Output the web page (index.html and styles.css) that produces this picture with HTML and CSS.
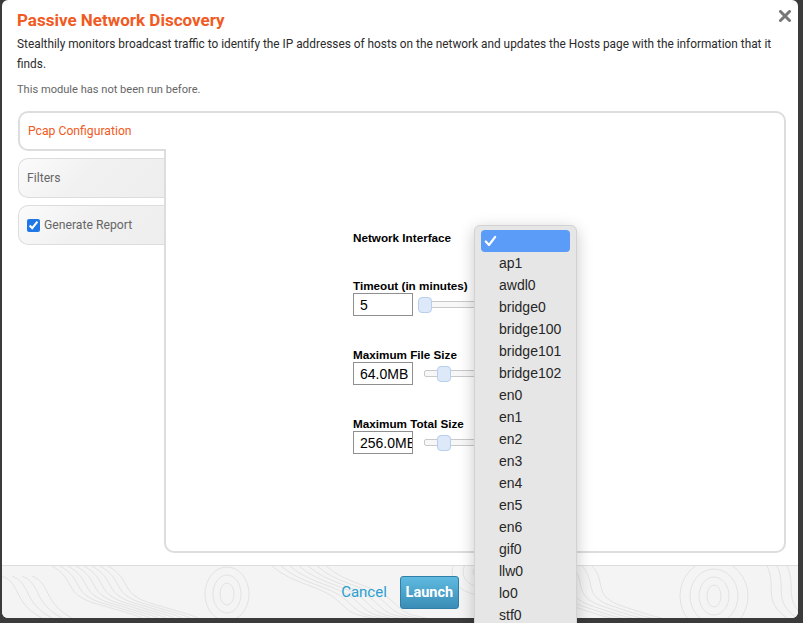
FILE: index.html
```html
<!DOCTYPE html>
<html lang="en">
<head>
<meta charset="utf-8">
<title>Passive Network Discovery</title>
<link rel="stylesheet" href="styles.css">
</head>
<body>
<div class="modal">
  <header class="modal-header">
    <h1 class="title">Passive Network Discovery</h1>
    <button class="close" type="button" aria-label="Close">
      <svg width="12" height="12" viewBox="0 0 12 12"><path d="M1.5 1.5 L10.5 10.5 M10.5 1.5 L1.5 10.5" stroke="#777" stroke-width="3" stroke-linecap="round" fill="none"/></svg>
    </button>
    <p class="desc">Stealthily monitors broadcast traffic to identify the IP addresses of hosts on the network and updates the Hosts page with the information that it finds.</p>
    <p class="note">This module has not been run before.</p>
  </header>

  <div class="tabs">
    <ul class="tab-list">
      <li class="tab tab-active">Pcap Configuration</li>
      <li class="tab">Filters</li>
      <li class="tab"><input class="check" type="checkbox" checked> Generate Report</li>
    </ul>
    <div class="tab-panel">
      <form class="form">
        <div class="field field-inline">
          <label class="label">Network Interface</label>
          <div class="select-box"></div>
        </div>
        <div class="field">
          <label class="label">Timeout (in minutes)</label>
          <div class="control">
            <input class="text-input" type="text" value="5">
            <div class="slider"><div class="track"></div><div class="thumb" style="left:0%"></div></div>
          </div>
        </div>
        <div class="field">
          <label class="label">Maximum File Size</label>
          <div class="control">
            <input class="text-input" type="text" value="64.0MB">
            <div class="slider"><div class="track"></div><div class="thumb" style="left:14.6%"></div></div>
          </div>
        </div>
        <div class="field">
          <label class="label">Maximum Total Size</label>
          <div class="control">
            <input class="text-input" type="text" value="256.0MB">
            <div class="slider"><div class="track"></div><div class="thumb" style="left:14.6%"></div></div>
          </div>
        </div>
      </form>
    </div>
  </div>

  <footer class="modal-footer">
    <svg class="topo" width="796" height="52" viewBox="0 0 796 52" preserveAspectRatio="none">
      <defs>
        <path id="w1" d="M50 0 C 75 14, 60 28, 95 38 S 130 48, 140 52" />
        <path id="w2" d="M270 0 C 290 18, 320 20, 335 34 S 350 48, 370 52" />
        <path id="w3" d="M540 0 C 555 16, 540 30, 570 40 S 600 50, 610 52" />
        <path id="w4" d="M0 10 C 20 18, 10 36, 40 52" />
      </defs>
      <g fill="none" stroke="#e0e0e0" stroke-width="0.9">
        <use href="#w4"/><use href="#w4" x="10"/><use href="#w4" x="20"/><use href="#w4" x="30"/>
        <use href="#w1"/><use href="#w1" x="8"/><use href="#w1" x="16"/><use href="#w1" x="24"/><use href="#w1" x="32"/><use href="#w1" x="40"/><use href="#w1" x="48"/><use href="#w1" x="56"/>
        <ellipse cx="225" cy="28" rx="7" ry="11"/>
        <ellipse cx="225" cy="28" rx="14" ry="19"/>
        <ellipse cx="225" cy="28" rx="22" ry="27"/>
        <use href="#w2"/><use href="#w2" x="9"/><use href="#w2" x="18"/><use href="#w2" x="27"/><use href="#w2" x="36"/><use href="#w2" x="45"/><use href="#w2" x="54"/>
        <ellipse cx="480" cy="6" rx="9" ry="7"/>
        <ellipse cx="480" cy="6" rx="19" ry="15"/>
        <ellipse cx="480" cy="6" rx="30" ry="23"/>
        <use href="#w3"/><use href="#w3" x="10"/><use href="#w3" x="20"/><use href="#w3" x="30"/><use href="#w3" x="40"/><use href="#w3" x="50"/>
        <ellipse cx="712" cy="30" rx="7" ry="11"/>
        <ellipse cx="712" cy="30" rx="15" ry="19"/>
        <ellipse cx="712" cy="30" rx="24" ry="27"/>
        <ellipse cx="712" cy="30" rx="34" ry="36"/>
        <path d="M765 0 C 775 20, 760 35, 785 52"/>
        <path d="M775 0 C 785 20, 770 35, 795 52"/>
        <path d="M785 0 C 795 20, 780 35, 805 52"/>
      </g>
    </svg>
    <a class="cancel" href="#">Cancel</a>
    <button class="launch" type="button">Launch</button>
  </footer>
</div>

<div class="popup">
  <div class="popup-item popup-selected">
    <svg class="checkmark" width="13" height="12" viewBox="0 0 13 12"><path d="M1.8 6.5 L5 10 L11.2 1.8" stroke="#fff" stroke-width="2.2" fill="none" stroke-linecap="round" stroke-linejoin="round"/></svg>
  </div>
  <div class="popup-item">ap1</div>
  <div class="popup-item">awdl0</div>
  <div class="popup-item">bridge0</div>
  <div class="popup-item">bridge100</div>
  <div class="popup-item">bridge101</div>
  <div class="popup-item">bridge102</div>
  <div class="popup-item">en0</div>
  <div class="popup-item">en1</div>
  <div class="popup-item">en2</div>
  <div class="popup-item">en3</div>
  <div class="popup-item">en4</div>
  <div class="popup-item">en5</div>
  <div class="popup-item">en6</div>
  <div class="popup-item">gif0</div>
  <div class="popup-item">llw0</div>
  <div class="popup-item">lo0</div>
  <div class="popup-item">stf0</div>
</div>
</body>
</html>
```

FILE: styles.css
```css
* { box-sizing: border-box; }

html, body {
  margin: 0;
  padding: 0;
  width: 803px;
  height: 623px;
  overflow: hidden;
  background: #3b3b3b;
}

body {
  position: relative;
  font-family: Roboto, "Liberation Sans", sans-serif;
}

.modal {
  position: relative;
  width: 796px;
  height: 618px;
  margin-left: 2px;
  background: #fff;
  border-radius: 6px;
  overflow: hidden;
  display: flex;
  flex-direction: column;
}

.modal-header {
  padding: 10px 10px 0 15px;
}

.title {
  margin: 0;
  font-family: Roboto, sans-serif;
  font-weight: 700;
  font-size: 17px;
  line-height: 20px;
  color: #f15a22;
}

.close {
  position: absolute;
  top: 10px;
  right: 7px;
  width: 12px;
  height: 12px;
  padding: 0;
  border: 0;
  background: none;
  display: block;
}
.close svg { display: block; }

.desc {
  margin: 4px 0 0;
  font-size: 11.85px;
  line-height: 20px;
  color: #2b2b2b;
}

.note {
  margin: 8px 0 0;
  font-size: 11.1px;
  line-height: 16px;
  color: #666;
}

.tabs {
  display: flex;
  height: 442px;
  margin: 13px 12px 0 16px;
}

.tab-list {
  list-style: none;
  margin: 0;
  padding: 0;
  width: 146px;
  display: flex;
  flex-direction: column;
  gap: 7px;
  position: relative;
  z-index: 2;
}

.tab {
  height: 40px;
  display: flex;
  align-items: center;
  padding-left: 8px;
  font-size: 12.2px;
  color: #666;
  border: 1px solid #ddd;
  border-right: 0;
  border-radius: 10px 0 0 10px;
  background: linear-gradient(135deg, #fbfbfb 0%, #f1f1f1 45%, #eeeeee 100%);
}

.tab-active {
  width: 148px;
  border: 2px solid #ddd;
  border-right: 0;
  background: #fff;
  color: #f15a22;
}

.check {
  width: 13px;
  height: 13px;
  margin: 0 4px 0 0;
  accent-color: #1f78e6;
}

.tab-panel {
  flex: 1;
  border: 2px solid #ddd;
  border-radius: 0 10px 10px 10px;
  background: #fff;
}

.form {
  padding: 117px 0 0 187px;
  font-family: "Liberation Sans", Arial, sans-serif;
}

.field {
  margin-bottom: 31px;
}

.field-inline {
  display: flex;
  align-items: center;
  height: 15px;
  margin-bottom: 33px;
}

.label {
  display: block;
  font-weight: 700;
  font-size: 11.7px;
  line-height: 15px;
  color: #000;
}

.select-box {
  width: 90px;
  height: 20px;
  margin-left: 30px;
  border: 1px solid #aaa;
  border-radius: 4px;
}

.control {
  display: flex;
  align-items: center;
  height: 23px;
}

.text-input {
  width: 60px;
  height: 23px;
  margin: 0;
  padding: 0 0 0 6px;
  border: 1px solid #8f8f8f;
  font-family: "Liberation Sans", Arial, sans-serif;
  font-size: 14px;
  color: #000;
  background: #fff;
}

.slider {
  position: relative;
  width: 130px;
  height: 16px;
  margin-left: 11px;
}

.track {
  position: absolute;
  left: 0;
  right: 0;
  top: 4px;
  height: 7px;
  border: 1px solid #c9c9c9;
  border-radius: 2px;
  background: #f7f7f7;
}

.thumb {
  position: absolute;
  top: 0;
  width: 14px;
  height: 16px;
  margin-left: -6px;
  border: 1px solid #b7cfec;
  border-radius: 4px;
  background: #dde9f8;
}

.modal-footer {
  position: relative;
  margin-top: 12px;
  height: 53px;
  border-top: 1px solid #ddd;
  background: #f4f4f4;
  display: flex;
  align-items: center;
  justify-content: center;
  gap: 13px;
}

.topo {
  position: absolute;
  left: 0;
  top: 0;
  width: 100%;
  height: 100%;
}

.cancel {
  position: relative;
  font-family: "Liberation Sans Narrow", Roboto, sans-serif;
  font-size: 15px;
  color: #2a9fd0;
  text-decoration: none;
}

.launch {
  position: relative;
  width: 59px;
  height: 33px;
  padding: 0;
  border: 1px solid #2f7fa7;
  border-radius: 3px;
  background: linear-gradient(#5fbae0, #3a8db6);
  color: #fff;
  font-family: "Liberation Sans Narrow", Roboto, sans-serif;
  font-weight: 700;
  font-size: 14.5px;
}

.popup {
  position: absolute;
  left: 474px;
  top: 225px;
  width: 103px;
  height: 420px;
  padding: 4px 6px 0;
  background: #e6e6e6;
  border: 1px solid #d2d2d2;
  border-radius: 6px;
  box-shadow: 0 4px 16px rgba(0, 0, 0, 0.22);
  font-family: "Liberation Sans", Arial, sans-serif;
  z-index: 10;
}

.popup-item {
  position: relative;
  height: 22px;
  line-height: 22px;
  padding-left: 18px;
  font-size: 14px;
  color: #262626;
}

.popup-selected {
  background: #5a9cf7;
  border-radius: 4px;
}

.checkmark {
  position: absolute;
  left: 3px;
  top: 5px;
}
```
